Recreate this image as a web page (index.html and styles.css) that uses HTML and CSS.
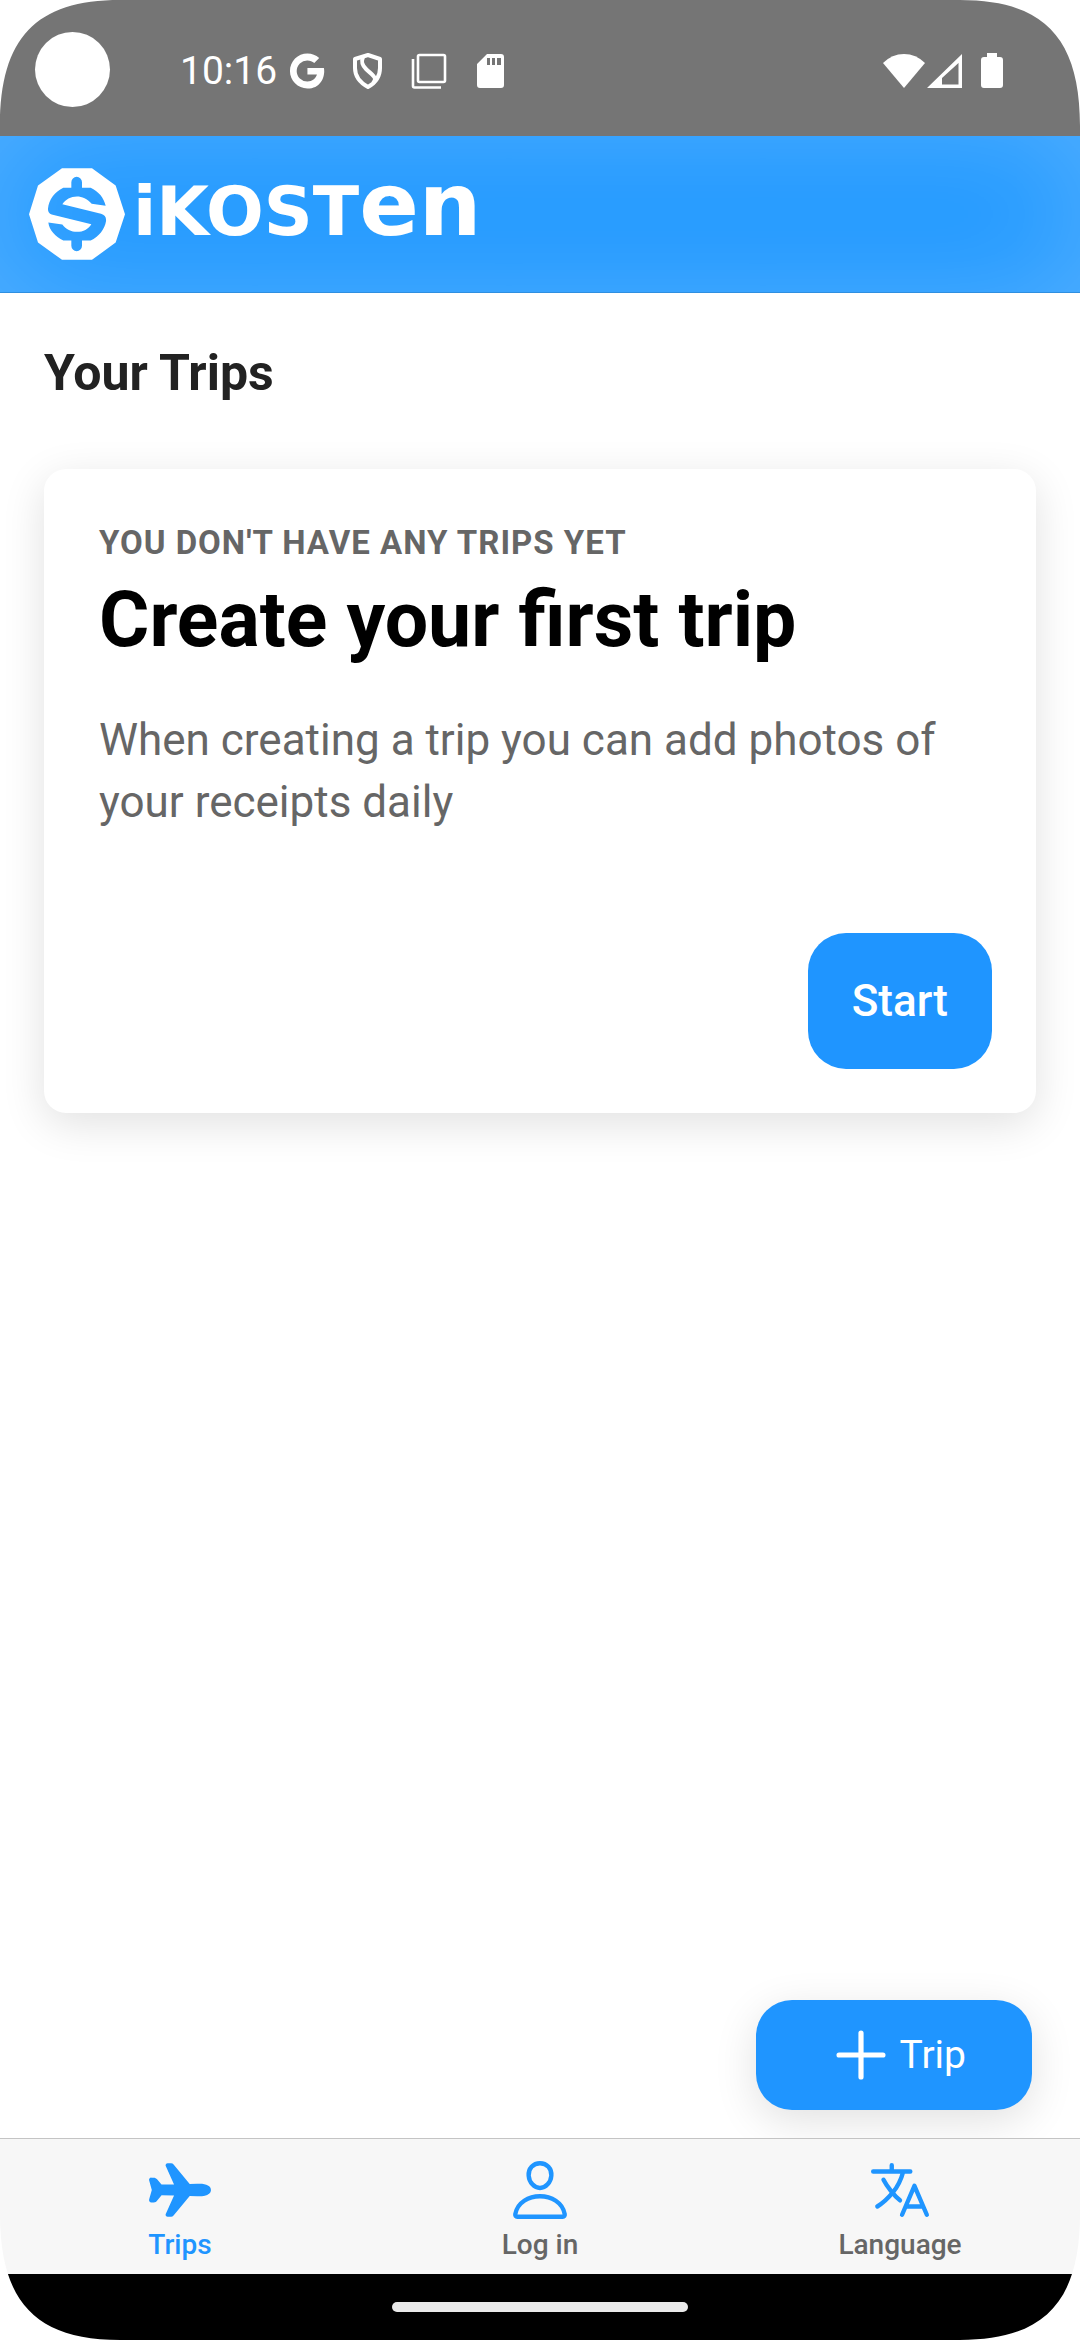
FILE: index.html
```html
<!DOCTYPE html>
<html lang="en">
<head>
  <meta charset="utf-8">
  <meta name="viewport" content="width=device-width, initial-scale=1">
  <title>iKosten</title>
  <link rel="stylesheet" href="styles.css">
</head>
<body>
  <div class="status">
    <span class="camera"></span>
    <span class="clock">10:16</span>
    <div class="notices">
      <svg class="notice" viewBox="2.4 1.7 19.8 20.6" aria-hidden="true"><path fill="currentColor" d="M12.545 10.239v3.821h5.445c-.712 2.315-2.647 3.972-5.445 3.972a6.033 6.033 0 1 1 0-12.064c1.498 0 2.866.549 3.921 1.453l2.814-2.814A9.969 9.969 0 0 0 12.545 2C7.021 2 2.543 6.477 2.543 12s4.478 10 10.002 10c8.396 0 10.249-7.85 9.426-11.748z"/></svg>
      <svg class="notice" viewBox="0 0 36 36" fill="none" stroke="currentColor" stroke-width="4" stroke-linejoin="round" aria-hidden="true"><path d="M18 2 30 6v9c0 8-3 14-12 19C9 29 5 23 5 15V6z"/><path d="M13 4c-2 5-1 8 3 12s9 7 9 10c0 2-1 3-2 4"/></svg>
      <svg class="notice" viewBox="0 0 36 36" fill="none" stroke="currentColor" stroke-width="2.6" aria-hidden="true"><rect x="7" y="2" width="27" height="27" rx="1.500"/><path d="M2 6v27q0 1.500 1.500 1.500H30"/></svg>
      <svg class="notice" viewBox="0 0 36 36" aria-hidden="true"><path fill="currentColor" fill-rule="evenodd" d="M15 1h14q3 0 3 3v28q0 3-3 3H8q-3 0-3-3V11zm0 4v7h3V5zm5 0v7h3V5zm5 0v7h4V5z"/></svg>
    </div>
    <div class="system">
      <svg class="wifi" viewBox="0 0 42 36" aria-hidden="true"><path fill="currentColor" d="M0 10Q9 1 21 1t21 9L21 35z"/></svg>
      <svg class="signal" viewBox="0 0 36 36" aria-hidden="true"><path fill="currentColor" fill-rule="evenodd" d="M35 1v34H0zM31.500 10 15 25v6.500h16.500z"/></svg>
      <svg class="battery" viewBox="0 0 22 36" aria-hidden="true"><path fill="currentColor" d="M6 0h10v4h3q3 0 3 3v25q0 3-3 3H3q-3 0-3-3V7q0-3 3-3h3z"/></svg>
    </div>
  </div>

  <header class="header">
    <svg class="emblem" viewBox="87 115 288 275" aria-hidden="true"><path fill="currentColor" fill-rule="evenodd" d="M186 115h90l71 52 28 86-28 85-71 52h-90l-72-52-27-85 27-86zM190 174C164 186 147 210 144 236q-1 14 11 18l119 29c-9 15-24 23-43 23-17 0-33-7-44-22l-42-6c3 24 22 43 45 54h24v16a16 16 0 0 0 32 0v-16h26c25-12 42-34 46-58q2-17-15-22l-116-29c10-14 25-23 44-23 15 0 31 6 44 22l42 6c-5-23-22-44-45-54h-26v-17a16 16 0 0 0-32 0v17z"/></svg>
    <span class="wordmark">iKOST<span class="wordmark-tall">en</span></span>
  </header>

  <main class="main">
    <h1 class="page-title">Your Trips</h1>
    <section class="card">
      <p class="card-kicker">You don't have any trips yet</p>
      <h2 class="card-title">Create your first trip</h2>
      <p class="card-text">When creating a trip you can add photos of your receipts daily</p>
      <button class="start" type="button">Start</button>
    </section>
    <button class="add-trip" type="button">
      <svg class="add-icon" viewBox="0 0 512 512" fill="none" stroke="currentColor" stroke-width="34" stroke-linecap="round" aria-hidden="true"><path d="M256 112v288M112 256h288"/></svg>
      <span>Trip</span>
    </button>
  </main>

  <nav class="tabs">
    <a class="tab tab-active" href="#trips">
      <svg class="tab-icon" viewBox="0 0 512 512" aria-hidden="true"><path fill="currentColor" d="M186.620 464H160a16 16 0 0 1-14.570-22.600l64.460-142.250L113.100 297l-35.300 42.770C71.070 348.230 65.700 352 52 352H34.080a17.660 17.660 0 0 1-14.700-7.060c-2.380-3.210-4.720-8.650-2.440-16.410l19.820-71c.15-.53.33-1.060.53-1.580a.38.38 0 0 0 0-.15 14.820 14.820 0 0 1-.53-1.590l-19.840-71.450c-2.150-7.610.2-12.930 2.560-16.060a16.830 16.830 0 0 1 13.600-6.700H52c10.230 0 20.160 4.590 26 12l34.570 42.050 97.320-1.440-64.440-142A16 16 0 0 1 160 48h26.910a25 25 0 0 1 19.350 9.800l125.050 152 57.770-1.520c4.230-.23 15.950-.31 18.660-.31C463 208 496 225.940 496 256c0 9.460-3.780 27-29.070 38.160-14.930 6.600-34.850 9.940-59.210 9.940-2.680 0-14.370-.08-18.660-.31l-57.760-1.540-125.360 152a25 25 0 0 1-19.320 9.750z"/></svg>
      <span>Trips</span>
    </a>
    <a class="tab" href="#login">
      <svg class="tab-icon" viewBox="0 0 512 512" fill="none" stroke="currentColor" stroke-width="34" stroke-linecap="round" stroke-linejoin="round" aria-hidden="true"><path d="M344 144c-3.920 52.870-44 96-88 96s-84.150-43.120-88-96c-4-55 35-96 88-96s92 42 88 96z"/><path d="M256 304c-87 0-175.300 48-191.640 138.600C62.390 453.520 68.570 464 80 464h352c11.440 0 17.620-10.480 15.650-21.400C431.300 352 343 304 256 304z"/></svg>
      <span>Log in</span>
    </a>
    <a class="tab" href="#language">
      <svg class="tab-icon" viewBox="0 0 512 512" fill="none" stroke="currentColor" stroke-width="34" stroke-linecap="round" stroke-linejoin="round" aria-hidden="true"><path d="M48 112h288M192 64v48M272 448l96-224 96 224M301.500 384h133M281.300 112S257 206 199 277 80 384 80 384"/><path d="M256 336s-35-27-72-75-56-85-56-85"/></svg>
      <span>Language</span>
    </a>
  </nav>

  <div class="gesture"><span class="handle"></span></div>

  <svg class="corner corner-tl" viewBox="0 0 120 126" aria-hidden="true"><path fill="#fff" d="M0 0h120C36 0 0 38 0 126z"/></svg>
  <svg class="corner corner-tr" viewBox="0 0 120 126" aria-hidden="true"><path fill="#fff" d="M120 0H0c84 0 120 38 120 126z"/></svg>
  <svg class="corner corner-bl" viewBox="0 0 120 126" aria-hidden="true"><path fill="#fff" d="M0 126h120C36 126 0 88 0 0z"/></svg>
  <svg class="corner corner-br" viewBox="0 0 120 126" aria-hidden="true"><path fill="#fff" d="M120 126H0c84 0 120-38 120-126z"/></svg>
</body>
</html>
```
FILE: styles.css
```css
:root {
  --blue: #1f95ff;
  --grey: #666;
}

* {
  box-sizing: border-box;
}

body {
  position: relative;
  display: flex;
  flex-direction: column;
  min-height: 100vh;
  margin: 0;
  background: #fff;
  font-family: Roboto, "Liberation Sans", sans-serif;
}

h1, h2, p {
  margin: 0;
}

button {
  border: 0;
  background: var(--blue);
  color: #fff;
  font-family: inherit;
}

svg {
  display: block;
  flex: none;
}

/* Status bar */
.status {
  display: flex;
  align-items: center;
  padding: 32px 77px 29px 35px;
  background: #757575;
  color: #fff;
}

.camera {
  width: 75px;
  height: 75px;
  border-radius: 50%;
  background: #fff;
}

.clock,
.notices,
.system {
  padding-top: 3px;
}

.clock {
  margin: 0 12px 0 70px;
  font-size: 39px;
  line-height: 46px;
}

.notices {
  display: flex;
  gap: 25px;
}

.notice {
  width: 36px;
  height: 36px;
}

.system {
  display: flex;
  gap: 2px;
  margin-left: auto;
}

.wifi {
  width: 42px;
  height: 36px;
}

.signal {
  width: 36px;
  height: 36px;
}

.battery {
  width: 22px;
  height: 36px;
  margin-left: 16px;
}

/* Header */
.header {
  display: flex;
  align-items: center;
  gap: 8px;
  height: 157px;
  padding-left: 29px;
  border-bottom: 1px solid #2f8fe0;
  background: #2199ff;
  box-shadow: inset 0 0 120px rgba(255, 255, 255, 0.22);
  color: #fff;
}

.emblem {
  width: 96px;
  height: 92px;
}

.wordmark {
  padding-bottom: 10px;
  font-family: "DejaVu Sans", sans-serif;
  font-size: 68px;
  font-weight: 700;
  line-height: 92px;
}

.wordmark-tall {
  font-size: 88px;
  line-height: 1;
}

/* Content */
.main {
  display: flex;
  flex: 1;
  flex-direction: column;
  padding: 50px 44px 28px;
}

.page-title {
  color: #222;
  font-size: 50px;
  font-weight: 700;
  line-height: 60px;
}

.card {
  display: flex;
  flex-direction: column;
  margin-top: 66px;
  padding: 54px 44px 44px 55px;
  border-radius: 22px;
  background: #fff;
  box-shadow: 0 11px 44px rgba(0, 0, 0, 0.12);
}

.card-kicker {
  color: var(--grey);
  font-size: 33px;
  font-weight: 700;
  letter-spacing: 1px;
  line-height: 40px;
  text-transform: uppercase;
}

.card-title {
  margin-top: 11px;
  color: #000;
  font-size: 77px;
  font-weight: 700;
  line-height: 92px;
}

.card-text {
  margin-top: 43px;
  color: var(--grey);
  font-size: 44px;
  line-height: 62px;
}

.start {
  align-self: flex-end;
  margin-top: 100px;
  padding: 42px 44px;
  border-radius: 38px;
  font-size: 44px;
  font-weight: 500;
  line-height: 52px;
}

.add-trip {
  display: flex;
  align-items: center;
  align-self: flex-end;
  margin: auto 4px 0 0;
  padding: 16px 66px;
  border-radius: 36px;
  box-shadow: 0 11px 44px rgba(0, 0, 0, 0.12);
  font-size: 39px;
  line-height: 46px;
}

.add-icon {
  width: 78px;
  height: 78px;
}

/* Tab bar */
.tabs {
  display: flex;
  border-top: 1px solid #c4c4c4;
  background: #f7f7f7;
}

.tab {
  display: flex;
  flex: 1;
  flex-direction: column;
  align-items: center;
  gap: 5px;
  padding: 18px 0 12px;
  color: var(--grey);
  font-size: 28px;
  font-weight: 500;
  line-height: 34px;
  text-decoration: none;
}

.tab-active {
  color: var(--blue);
}

.tab-icon {
  width: 66px;
  height: 66px;
  color: var(--blue);
}

.gesture {
  display: flex;
  align-items: center;
  justify-content: center;
  padding: 28px 0;
  background: #000;
}

.handle {
  width: 296px;
  height: 10px;
  border-radius: 5px;
  background: #eaeaea;
}

/* Rounded display corners laid over the bars */
.corner {
  position: absolute;
  width: 120px;
  height: 126px;
  pointer-events: none;
}

.corner-tl {
  top: 0;
  left: 0;
}

.corner-tr {
  top: 0;
  right: 0;
}

.corner-bl {
  bottom: 0;
  left: 0;
}

.corner-br {
  right: 0;
  bottom: 0;
}
```
